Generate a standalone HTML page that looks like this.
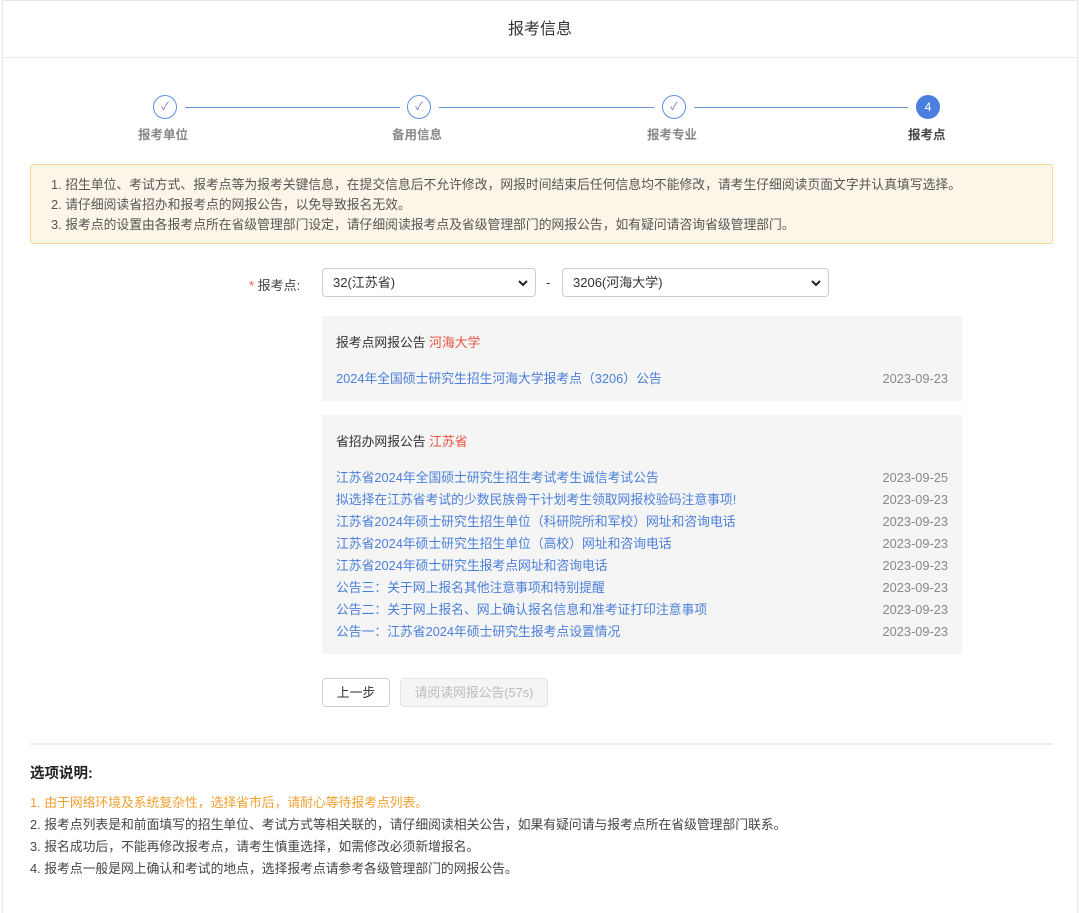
<!DOCTYPE html>
<html><head><meta charset="utf-8"><style>
*{margin:0;padding:0;box-sizing:border-box}
body{width:1080px;height:913px;background:#fff;font-family:"Liberation Sans","Noto Sans CJK SC",sans-serif;font-size:12.8px;color:#333;position:relative;overflow:hidden}
.frame{position:absolute;left:2px;top:0;width:1076px;height:913px;border:1px solid #e6e6e6;border-bottom:none}
.hdr{position:absolute;left:3px;top:1px;width:1074px;height:57px;border-bottom:1px solid #e8e8e8;text-align:center;line-height:58px;font-size:16px;color:#333}
.ab{position:absolute;white-space:nowrap}
.c{position:absolute;width:24px;height:24px;border:1px solid #5b8ee6;border-radius:50%;top:95px;color:#7a6fd0;font-size:11px;text-align:center;line-height:22px;background:#fff}
.c.on{background:#4a7fe0;border-color:#4a7fe0;color:#fff;font-size:12px}
.ln{position:absolute;top:107px;height:1px;background:#6b8fd6}
.sl{position:absolute;top:124px;font-size:12.5px;color:#888;font-weight:bold}
.alert{position:absolute;left:30px;top:164px;width:1023px;height:80px;background:#fdf6e8;border:1px solid #f5d79a;border-radius:3px;padding:10px 0 0 20px;line-height:20px;color:#555;white-space:nowrap}
.sel{position:absolute;top:268px;height:29px;border:1px solid #ccc;border-radius:4px;padding-left:10px;line-height:27px;font-size:13px;color:#333;background:#fff}
.sel svg{position:absolute;right:7px;top:10px}
.box{position:absolute;left:322px;width:640px;background:#f5f5f5}
.lk{color:#4a7fd9}
.dt{position:absolute;right:14px;top:3px;color:#888}
.row{position:absolute;left:14px;right:0;white-space:nowrap}
.btn{position:absolute;top:678px;height:29px;border:1px solid #d0d0d0;border-radius:4px;text-align:center;line-height:27px}
</style></head><body>
<div class="frame"></div>
<div class="hdr">报考信息</div>

<div class="ln" style="left:185px;width:215px"></div>
<div class="ln" style="left:439px;width:215px"></div>
<div class="ln" style="left:694px;width:214px"></div>
<div class="c" style="left:153px">✓</div>
<div class="c" style="left:407px">✓</div>
<div class="c" style="left:662px">✓</div>
<div class="c on" style="left:916px">4</div>
<div class="sl" style="left:138px">报考单位</div>
<div class="sl" style="left:392px">备用信息</div>
<div class="sl" style="left:647px">报考专业</div>
<div class="sl" style="left:908px;color:#444">报考点</div>

<div class="alert">
1. 招生单位、考试方式、报考点等为报考关键信息，在提交信息后不允许修改，网报时间结束后任何信息均不能修改，请考生仔细阅读页面文字并认真填写选择。<br>
2. 请仔细阅读省招办和报考点的网报公告，以免导致报名无效。<br>
3. 报考点的设置由各报考点所在省级管理部门设定，请仔细阅读报考点及省级管理部门的网报公告，如有疑问请咨询省级管理部门。
</div>

<div class="ab" style="left:249px;top:275px;font-size:13px;color:#444"><span style="color:#e55">*</span> 报考点:</div>
<div class="sel" style="left:322px;width:214px">32(江苏省)<svg width="10" height="8" viewBox="0 0 10 8"><path d="M1 2l4 4 4-4" stroke="#222" stroke-width="2" fill="none"/></svg></div>
<div class="ab" style="left:546px;top:275px;font-size:13px">-</div>
<div class="sel" style="left:562px;width:267px">3206(河海大学)<svg width="10" height="8" viewBox="0 0 10 8"><path d="M1 2l4 4 4-4" stroke="#222" stroke-width="2" fill="none"/></svg></div>

<div class="box" style="top:316px;height:85px">
<div class="row" style="top:16px;color:#333">报考点网报公告 <span style="color:#e5533d">河海大学</span></div>
<div class="row lk" style="top:52px">2024年全国硕士研究生招生河海大学报考点（3206）公告<span class="dt">2023-09-23</span></div>
</div>

<div class="box" style="top:415px;height:239px">
<div class="row" style="top:16px">省招办网报公告 <span style="color:#e5533d">江苏省</span></div>
<div class="row lk" style="top:52px">江苏省2024年全国硕士研究生招生考试考生诚信考试公告<span class="dt">2023-09-25</span></div>
<div class="row lk" style="top:74px">拟选择在江苏省考试的少数民族骨干计划考生领取网报校验码注意事项!<span class="dt">2023-09-23</span></div>
<div class="row lk" style="top:96px">江苏省2024年硕士研究生招生单位（科研院所和军校）网址和咨询电话<span class="dt">2023-09-23</span></div>
<div class="row lk" style="top:118px">江苏省2024年硕士研究生招生单位（高校）网址和咨询电话<span class="dt">2023-09-23</span></div>
<div class="row lk" style="top:140px">江苏省2024年硕士研究生报考点网址和咨询电话<span class="dt">2023-09-23</span></div>
<div class="row lk" style="top:162px">公告三：关于网上报名其他注意事项和特别提醒<span class="dt">2023-09-23</span></div>
<div class="row lk" style="top:184px">公告二：关于网上报名、网上确认报名信息和准考证打印注意事项<span class="dt">2023-09-23</span></div>
<div class="row lk" style="top:206px">公告一：江苏省2024年硕士研究生报考点设置情况<span class="dt">2023-09-23</span></div>
</div>

<div class="btn" style="left:322px;width:68px;color:#333">上一步</div>
<div class="btn" style="left:400px;width:148px;background:#f4f5f7;border-color:#e2e4e8;color:#bbb">请阅读网报公告(57s)</div>

<div class="ab" style="left:30px;top:743px;width:1023px;height:2px;background:#ebebeb"></div>
<div class="ab" style="left:30px;top:762px;font-size:14.5px;font-weight:bold;color:#222">选项说明:</div>
<div class="ab" style="left:30px;top:792px;color:#f0a030">1. 由于网络环境及系统复杂性，选择省市后，请耐心等待报考点列表。</div>
<div class="ab" style="left:30px;top:814px;color:#444">2. 报考点列表是和前面填写的招生单位、考试方式等相关联的，请仔细阅读相关公告，如果有疑问请与报考点所在省级管理部门联系。</div>
<div class="ab" style="left:30px;top:836px;color:#444">3. 报名成功后，不能再修改报考点，请考生慎重选择，如需修改必须新增报名。</div>
<div class="ab" style="left:30px;top:858px;color:#444">4. 报考点一般是网上确认和考试的地点，选择报考点请参考各级管理部门的网报公告。</div>
</body></html>
